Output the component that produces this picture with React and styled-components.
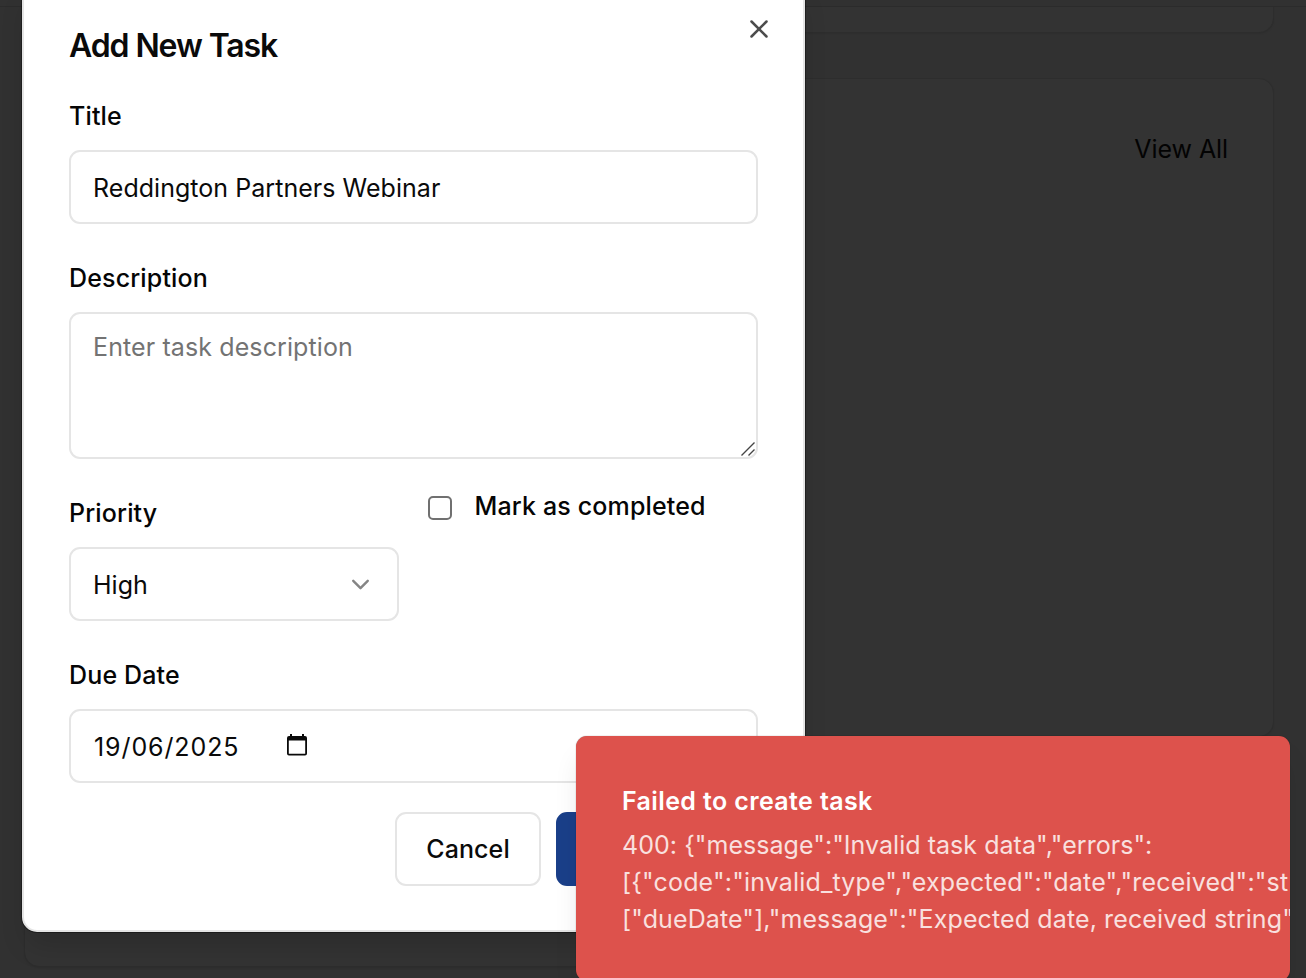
import React from "react";
import styled, { createGlobalStyle } from "styled-components";
import { X, ChevronDown } from "lucide-react";

const GlobalStyle = createGlobalStyle`
  *, *::before, *::after { box-sizing: border-box; }
  body { margin: 0; overflow: hidden; background: #313131; }
  button { font: inherit; letter-spacing: inherit; padding: 0; }
`;

const Page = styled.div`
  position: relative;
  height: 978px;
  overflow: hidden;
  font-family: Inter, "Liberation Sans", sans-serif;
  font-size: 25px;
  line-height: 37px;
  color: #0a0a0a;
`;

const Header = styled.header`
  height: 7px;
  border-bottom: 1px solid #2b2b2b;
`;

const Cards = styled.main`
  display: flex;
  flex-direction: column;
  gap: 45px;
  padding: 0 32px 0 24px;
`;

const Card = styled.section`
  height: ${(p) => p.$height}px;
  border: 1px solid #2d2d2d;
  border-top-width: ${(p) => (p.$cut ? 0 : 1)}px;
  border-radius: ${(p) => (p.$cut ? "0 0 15px 15px" : "15px")};
  background: #333333;
  box-shadow: 0 1px 2px rgba(0, 0, 0, 0.07);
  padding: ${(p) => (p.$cut ? "0" : "52px 45px 0")};
  text-align: right;
`;

const ViewAll = styled.a`
  color: #030303;
  letter-spacing: -0.08px;
`;

const Dialog = styled.div`
  position: absolute;
  left: 22px;
  top: -20px;
  width: 783px;
  height: 952px;
  padding: 47px 45px 45px;
  background: #fff;
  border: 2px solid #e5e5e5;
  border-radius: 15px;
  box-shadow: 0 0 0 1px rgba(0, 0, 0, 0.35), 0 18px 28px -6px rgba(0, 0, 0, 0.16);
  display: flex;
  flex-direction: column;
`;

const CloseButton = styled.button`
  position: absolute;
  top: 32px;
  right: 29.500px;
  width: 30px;
  height: 30px;
  border: 0;
  background: none;
  color: #4c4c4c;
  display: grid;
  place-items: center;
`;

const DialogTitle = styled.h2`
  margin: 0 0 38px;
  font-size: 32px;
  line-height: 34px;
  font-weight: 600;
  letter-spacing: -1.1px;
`;

const Form = styled.form`
  display: flex;
  flex-direction: column;
  gap: 39px;
`;

const Field = styled.div`
  display: flex;
  flex-direction: column;
  gap: 19px;
`;

const Label = styled.label`
  font-weight: 500;
  line-height: 30px;
  height: 30px;
  color: #050505;
  letter-spacing: 0.15px;
  white-space: nowrap;
`;

const Control = styled.div`
  position: relative;
  height: ${(p) => p.$height || 74}px;
  padding: ${(p) => (p.$height ? "15px 22px" : "2px 22px 0")};
  border: 2px solid #e5e5e5;
  border-radius: 11px;
  display: flex;
  align-items: ${(p) => (p.$height ? "flex-start" : "center")};
  justify-content: ${(p) => (p.$spread ? "space-between" : "flex-start")};
  letter-spacing: ${(p) => p.$track || "0.04px"};
  color: ${(p) => (p.$muted ? "#737373" : "#0a0a0a")};
  white-space: nowrap;
`;

const Grip = styled.svg`
  position: absolute;
  right: -1px;
  bottom: -1px;
`;

const Chevron = styled(ChevronDown)`
  margin-bottom: 2px;
`;

const Columns = styled.div`
  display: grid;
  grid-template-columns: 330px 330px;
  gap: 29px;
`;

const CheckRow = styled.div`
  display: flex;
  align-items: flex-start;
  gap: 22.500px;
  margin-top: -7px;
`;

const Checkbox = styled.span`
  width: 24px;
  height: 24px;
  margin-top: 5px;
  border: 2px solid #707070;
  border-radius: 5px;
`;

const DateText = styled.span`
  margin-left: 1px;
`;

const CalendarIcon = styled.svg`
  margin: 0 0 4px 48px;
`;

const Actions = styled.div`
  display: flex;
  justify-content: flex-end;
  gap: 15px;
  margin-top: 29px;
`;

const Button = styled.button`
  width: ${(p) => p.$width}px;
  height: 74px;
  border-radius: 11px;
  border: 2px solid ${(p) => (p.$primary ? "#1a3f89" : "#e5e5e5")};
  background: ${(p) => (p.$primary ? "#1a3f89" : "#fff")};
  color: #0a0a0a;
  font-weight: 500;
  letter-spacing: 0.1px;
`;

const Toast = styled.div`
  position: absolute;
  left: 576px;
  top: 736px;
  width: 714px;
  height: 245px;
  padding: 47px 46px;
  border-radius: 11px;
  background: #dd524c;
  color: #fff;
  overflow: hidden;
  box-shadow: 0 18px 28px -6px rgba(0, 0, 0, 0.12), 0 0 1px rgba(0, 0, 0, 0.5);
`;

const ToastTitle = styled.div`
  font-weight: 600;
  letter-spacing: 0.38px;
  margin-bottom: 7px;
`;

const ToastText = styled.div`
  color: #f9e0df;
  white-space: nowrap;
  letter-spacing: ${(p) => p.$track};
`;

export default function App() {
  return (
    <Page>
      <GlobalStyle />
      <Header />
      <Cards>
        <Card $height={26} $cut />
        <Card $height={659}>
          <ViewAll>View All</ViewAll>
        </Card>
        <Card $height={185} />
      </Cards>

      <Dialog role="dialog">
        <CloseButton aria-label="Close">
          <X size={30} strokeWidth={2} />
        </CloseButton>
        <DialogTitle>Add New Task</DialogTitle>
        <Form>
          <Field>
            <Label>Title</Label>
            <Control>Reddington Partners Webinar</Control>
          </Field>
          <Field>
            <Label>Description</Label>
            <Control $height={147} $muted $track="0.11px">
              Enter task description
              <Grip width="17" height="17" viewBox="0 0 17 17" fill="none" stroke="#444" strokeWidth="1.4">
                <path d="M1.5 14.5 14.5 1.5M8.5 14.5 14.5 8.5" />
              </Grip>
            </Control>
          </Field>
          <Columns>
            <Field>
              <Label>Priority</Label>
              <Control $spread>
                High
                <Chevron size={29} color="#858585" strokeWidth={2} />
              </Control>
            </Field>
            <CheckRow>
              <Checkbox />
              <Label>Mark as completed</Label>
            </CheckRow>
          </Columns>
          <Field>
            <Label>Due Date</Label>
            <Control $track="0.9px">
              <DateText>19/06/2025</DateText>
              <CalendarIcon width="20" height="22" viewBox="0 0 20 22" fill="#0a0a0a">
                <path d="M3 0h2v2h10V0h2v2h1a2 2 0 0 1 2 2v15.500a2 2 0 0 1-2 2H2a2 2 0 0 1-2-2V4a2 2 0 0 1 2-2h1zM1.800 6.500v13.200h16.400V6.500z" fillRule="evenodd" />
              </CalendarIcon>
            </Control>
          </Field>
        </Form>
        <Actions>
          <Button $width={146}>Cancel</Button>
          <Button $width={202} $primary aria-label="Add task" />
        </Actions>
      </Dialog>

      <Toast role="alert">
        <ToastTitle>Failed to create task</ToastTitle>
        <ToastText $track="0.04px">{'400: {"message":"Invalid task data","errors":'}</ToastText>
        <ToastText $track="0.16px">{'[{"code":"invalid_type","expected":"date","received":"st'}</ToastText>
        <ToastText $track="0.12px">{'["dueDate"],"message":"Expected date, received string"'}</ToastText>
      </Toast>
    </Page>
  );
}
